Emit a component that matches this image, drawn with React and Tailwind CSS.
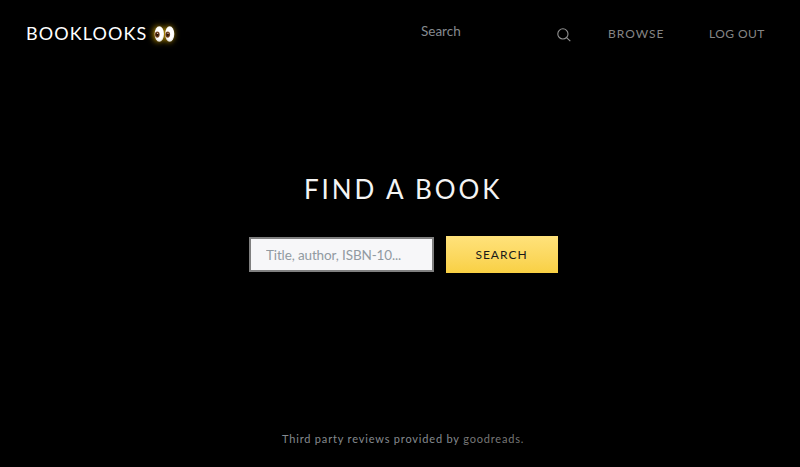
function Eyes() {
  return (
    <svg viewBox="0 0 24 22" className="mb-px h-[22px] w-6 overflow-visible [filter:drop-shadow(-1px_0_3px_#d6a500)]" aria-hidden="true">
      <defs>
        <radialGradient id="eyeWhite" cx="50%" cy="45%" r="60%">
          <stop offset="0.65" stopColor="#ffffff" />
          <stop offset="1" stopColor="#d5d2cb" />
        </radialGradient>
        <radialGradient id="iris">
          <stop offset="0.2" stopColor="#241005" />
          <stop offset="1" stopColor="#8a5229" />
        </radialGradient>
      </defs>
      <ellipse cx="7.3" cy="11" rx="4.7" ry="7.7" fill="url(#eyeWhite)" />
      <ellipse cx="17.7" cy="11" rx="4.6" ry="7.7" fill="url(#eyeWhite)" />
      <ellipse cx="5.3" cy="11.6" rx="2.4" ry="3.1" fill="url(#iris)" />
      <ellipse cx="15.7" cy="11.6" rx="2.4" ry="3.1" fill="url(#iris)" />
      <circle cx="5.6" cy="10.4" r="0.6" fill="#e5c9b2" />
      <circle cx="16" cy="10.4" r="0.6" fill="#e5c9b2" />
    </svg>
  );
}

function SearchIcon() {
  return (
    <svg viewBox="0 0 14 14" className="mt-px h-3.5 w-3.5" fill="none" stroke="#929292" strokeWidth="1.1" aria-hidden="true">
      <circle cx="5.9" cy="5.9" r="5.1" />
      <path d="M9.6 9.6 13.3 13.2" />
    </svg>
  );
}

export default function App() {
  return (
    <div className="flex h-[467px] w-[800px] flex-col overflow-hidden bg-black font-['Lato',sans-serif] whitespace-nowrap">
      <header className="flex h-[68px] items-center pl-[26px]">
        <a className="flex w-[395px] items-center text-[18px] leading-6 text-white">
          <span className="mb-[3px] w-[126px] tracking-[1.08px]">BOOKLOOKS</span>
          <Eyes />
        </a>
        <div className="flex w-[187px] items-center">
          <input
            placeholder="Search"
            aria-label="Search"
            className="mb-[7px] h-6 w-[136px] bg-transparent text-[13.5px] outline-none placeholder:text-[#858a90]"
          />
          <SearchIcon />
        </div>
        <nav className="flex text-[12px] leading-4 text-[#858585]">
          <a className="w-[101px] tracking-[1px]">BROWSE</a>
          <a className="tracking-[0.45px]">LOG OUT</a>
        </nav>
      </header>
      <main className="flex flex-1 flex-col pt-[101px]">
        <h1 className="pl-[304px] text-[26px] leading-10 tracking-[2.9px] text-[#f4f4f4]">FIND A BOOK</h1>
        <form className="mt-[27px] flex items-center gap-[11.5px] pl-[249px]">
          <input
            placeholder="Title, author, ISBN-10..."
            aria-label="Book search"
            className="h-[35px] w-[185px] border-2 border-[#808080] bg-[#f7f7f9] px-[15px] text-[13.5px] tracking-[-0.13px] outline-none placeholder:text-[#919aa1]"
          />
          <button type="button" className="h-[37px] w-28 bg-linear-to-b from-[#ffe27a] to-[#f9d043] text-[12px] tracking-[1px] text-[#1a1a1a]">
            SEARCH
          </button>
        </form>
      </main>
      <footer className="h-[36px] pl-[282px] text-[11px] leading-4 tracking-[0.82px] text-[#858a8f]">
        Third party reviews provided by <span className="text-[#777777]">goodreads.</span>
      </footer>
    </div>
  );
}
